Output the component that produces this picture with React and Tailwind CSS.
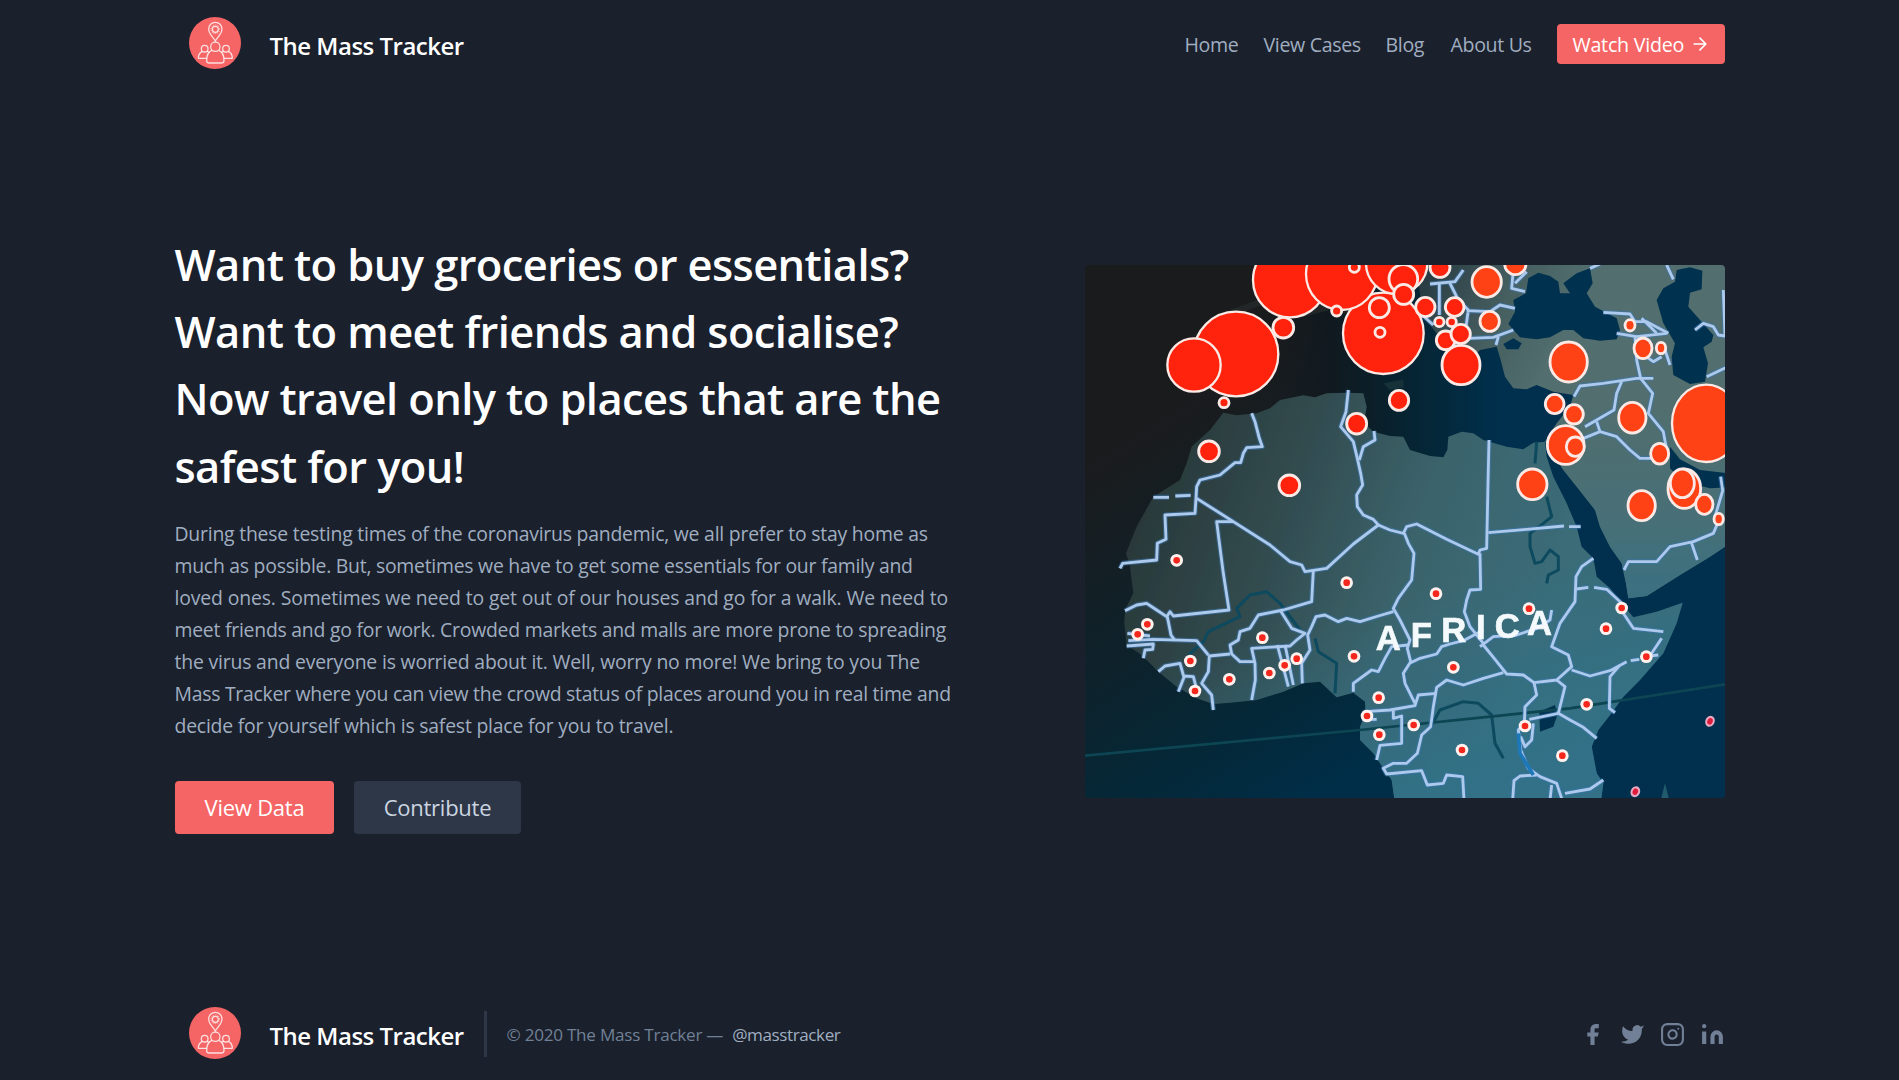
import React from 'react';

const FONT = "font-['Open_Sans','Noto_Sans',sans-serif]";

const headline = [
  'Want to buy groceries or essentials?',
  'Want to meet friends and socialise?',
  'Now travel only to places that are the',
  'safest for you!',
];

const intro = [
  ['During these testing times of the coronavirus pandemic, we all prefer to stay home as', 'tracking-[-0.22px]'],
  ['much as possible. But, sometimes we have to get some essentials for our family and', 'tracking-[-0.25px]'],
  ['loved ones. Sometimes we need to get out of our houses and go for a walk. We need to', 'tracking-[-0.14px]'],
  ['meet friends and go for work. Crowded markets and malls are more prone to spreading', 'tracking-[-0.24px]'],
  ['the virus and everyone is worried about it. Well, worry no more! We bring to you The', 'tracking-[-0.18px]'],
  ['Mass Tracker where you can view the crowd status of places around you in real time and', 'tracking-[-0.26px]'],
  ['decide for yourself which is safest place for you to travel.', 'tracking-[-0.21px]'],
];

function Logo() {
  return (
    <svg viewBox="26 27 156 156" className="h-[52px] w-[52px] shrink-0">
      <circle cx="104" cy="105" r="78" fill="#f56565" />
      <g fill="none" stroke="#fff" strokeWidth="3.8" strokeOpacity="0.8" strokeLinejoin="round">
        <path d="M105 99 C98 86 85 78 85 63 A20 20 0 0 1 125 63 C125 78 112 86 105 99 Z" />
        <circle cx="105" cy="64" r="9" />
        <circle cx="105" cy="64" r="13" strokeWidth="3" strokeDasharray="2.5 3.3" />
        <circle cx="105" cy="116" r="14" />
        <path d="M95 127 C84 131 79 141 79 158 Q79 165 87 165 H122 Q131 165 131 158 C131 141 126 131 115 127" />
        <circle cx="73" cy="122" r="10" />
        <circle cx="137" cy="122" r="10" />
        <path d="M66 130 C57 134 54 141 54 151 H79" />
        <path d="M144 130 C153 134 156 141 156 151 H131" />
        <path d="M80 130 Q86 132 87 134 M130 130 Q124 132 123 134" />
      </g>
    </svg>
  );
}

function Brand() {
  return (
    <div className="flex items-center">
      <Logo />
      <span className="ml-[29px] mt-[5px] w-[194px] text-[24px] font-semibold leading-[28px] tracking-[-0.5px] whitespace-nowrap text-white">
        The Mass Tracker
      </span>
    </div>
  );
}

const EURASIA =
  'M1035 30 L1980 30 V880 L1920 920 L1830 975 L1730 1038 L1675 1045 L1668 1000 L1655 940 L1620 890 L1590 830 L1575 780 L1520 710 L1480 660 L1440 600 L1425 575 L1460 520 L1500 470 L1510 435 L1450 425 L1400 405 L1370 418 L1330 415 L1305 380 L1292 330 L1280 290 L1230 300 L1200 330 L1160 340 L1120 300 L1100 250 L1060 200 Z';

const AFRICA =
  'M835 428 L880 430 L890 470 L882 520 L910 545 L960 558 L1000 560 L1020 600 L1080 618 L1120 622 L1132 600 L1135 560 L1175 545 L1210 550 L1240 570 L1310 590 L1360 598 L1390 578 L1425 575 L1430 620 L1450 680 L1490 760 L1520 830 L1535 890 L1570 925 L1580 980 L1620 1015 L1655 1060 L1690 1102 L1760 1085 L1838 1058 L1820 1120 L1780 1210 L1710 1290 L1660 1340 L1620 1395 L1585 1440 L1565 1490 L1580 1570 L1600 1600 L1592 1660 L975 1660 L965 1590 L930 1540 L910 1510 L870 1470 L870 1430 L887 1390 L885 1355 L850 1328 L800 1342 L750 1295 L700 1300 L640 1325 L560 1350 L480 1358 L430 1362 L380 1345 L320 1310 L265 1265 L215 1215 L170 1185 L163 1120 L165 1080 L190 1030 L180 950 L168 910 L200 830 L250 740 L330 690 L350 640 L365 590 L420 540 L460 488 L500 496 L560 490 L600 475 L630 450 L700 436 L735 442 L770 430 Z';

const SEAS = [
  'M1405 68 L1440 78 L1465 95 L1470 130 L1500 130 L1480 100 L1520 70 L1560 55 L1568 100 L1550 130 L1575 170 L1640 205 L1650 240 L1640 268 L1590 272 L1540 265 L1510 240 L1480 240 L1440 262 L1400 268 L1350 262 L1315 222 L1335 185 L1330 150 L1368 130 L1375 85 Z',
  'M1300 282 L1330 265 L1355 280 L1345 298 L1310 298 Z',
  'M1820 60 L1860 52 L1897 62 L1895 118 L1860 128 L1855 170 L1890 210 L1930 255 L1925 275 L1900 292 L1914 340 L1905 395 L1860 402 L1810 375 L1805 320 L1815 280 L1780 220 L1760 150 L1780 115 L1815 95 Z',
  'M1800 590 L1830 628 L1890 660 L1975 670 L1975 712 L1920 715 L1840 695 L1800 655 Z',
  'M1408 1385 L1455 1365 L1462 1395 L1450 1430 L1410 1445 Z',
];

const BORDERS = [
  'M545 490 L555 515 L568 565 L577 590 L530 593 L520 610 L512 638 L495 638 L450 675 L390 690 L380 710 L378 745 L375 790 L285 795 L288 868 L262 880 L260 930 L158 940 L150 955',
  'M380 745 L490 815 L600 885 L660 935 L695 945 L705 965 L770 955 L850 882 L925 825 L910 808 L880 795 L862 770 L860 735 L878 705 L872 670 L862 625 L850 575 L812 530 L828 485 L835 420',
  'M490 815 L440 815 L447 870 L460 970 L477 1080 L310 1098 L300 1085 L290 1100 L260 1080 L230 1060 L200 1065 L165 1082',
  'M292 1100 L303 1155 L315 1172',
  'M868 630 L880 590 L915 570 L912 543',
  'M250 742 H297 M316 738 L362 736',
  'M925 825 L960 840 L1000 850 L1010 830 L1040 822 L1130 868 L1225 913 L1230 900 L1250 895 L1254 700 L1257 570',
  'M1255 848 L1370 838 L1482 828 M1497 830 H1532',
  'M1230 910 L1232 1018 L1200 1020 L1190 1050 L1183 1085 L1200 1130 L1240 1180',
  'M1003 850 L1015 880 L1032 910 L1025 990 L985 1045 L970 1075 L990 1110 L1020 1170 L1012 1195 L1022 1235 L1000 1270 L1005 1300 L1035 1360',
  'M1022 1238 L1050 1225 L1100 1212 L1115 1190 L1140 1182 L1180 1172 L1240 1140',
  'M1240 1185 L1275 1228 L1310 1272 L1360 1275 L1392 1298 L1460 1290 L1505 1250 L1495 1215 L1445 1190 L1470 1120 L1515 1055 L1518 980 L1535 950 L1570 925',
  'M1230 1190 L1270 1160 L1340 1155 L1400 1135 L1440 1110 L1445 1080',
  'M1300 1268 L1240 1285 L1180 1305 L1130 1290 L1100 1312 L1090 1370 L1082 1430 L1055 1455 L1042 1510 L1010 1540 L970 1540 L940 1555 L950 1572 L1055 1562 L1072 1605 L1120 1600 L1130 1575 L1178 1580 L1182 1650',
  'M1100 1330 L1045 1335 L1035 1367 L960 1380 L885 1385 L882 1408 L920 1408',
  'M970 1382 V1405 L995 1398 L995 1480 L930 1486 L920 1530',
  'M1392 1298 L1400 1335 L1365 1370 L1363 1420 L1345 1440 L1352 1500 L1375 1555 L1410 1580 L1460 1600 L1475 1645',
  'M1460 1290 L1485 1310 L1465 1390 L1500 1410 L1540 1432 L1580 1465',
  'M1378 1408 L1465 1390 M1390 1420 L1385 1470 L1365 1490 L1352 1460',
  'M1505 1260 L1560 1278 L1620 1262 L1670 1235 M1650 1245 L1620 1280 L1618 1375 L1635 1388',
  'M1682 1232 L1708 1228 M1718 1220 L1765 1215',
  'M1660 1090 L1690 1135 L1780 1145 M1775 1165 L1735 1225',
  'M1520 1017 L1555 1012 M1572 1012 L1610 1018 L1655 1060',
  'M1485 1630 L1560 1617 L1600 1590 M1440 1650 L1445 1605',
  'M1328 1650 L1332 1592 L1350 1578 L1400 1575',
  'M850 1325 L850 1300 L905 1260 L925 1265 L945 1225 L965 1190 L1015 1185',
  'M970 1085 L925 1098 L870 1115 L830 1105 L805 1115 L765 1095 L738 1100 L725 1130 L713 1155 L720 1200 L695 1240 L697 1300',
  'M730 960 L725 1055 L640 1080 L565 1095 L540 1135 L510 1145 L505 1170 L480 1185 L485 1212 L510 1235 L555 1235',
  'M630 1080 L665 1135 L705 1150 L680 1170 L660 1188 L545 1195 L555 1240 L556 1290 L545 1350',
  'M622 1185 L655 1310 M645 1185 L670 1305',
  'M480 1212 L418 1218 L415 1265 L395 1300 L425 1335 L430 1380',
  'M175 1172 L250 1168 L380 1172 L415 1215 M172 1150 L240 1158 M170 1188 L250 1182 L248 1198 L225 1200 L220 1225',
  'M265 1265 L285 1248 L330 1240 L342 1282 L325 1325 M342 1278 L370 1280 L378 1310',
  'M1512 440 L1530 408 L1600 400 L1700 385 L1750 385 M1655 395 L1640 430 L1632 480 L1545 530',
  'M1540 565 L1590 545 L1640 560 L1680 600 L1710 625 L1760 625 M1580 515 L1590 545',
  'M1695 260 L1700 330 L1712 385 L1748 430 L1735 490 L1780 545 L1790 600',
  'M1600 187 L1680 192 L1695 215 L1730 215 L1795 250 M1640 250 L1700 260 L1790 250',
  'M1700 300 L1750 335 L1775 320 M1785 300 L1800 345 M1715 205 L1760 250',
  'M1875 240 L1900 220 L1930 230 L1945 255 L1965 258 L1960 120 M1910 380 L1970 352',
  'M1952 680 L1958 722 L1935 800 M1662 960 L1675 935 L1760 935 L1800 890 L1870 875 L1930 850 L1945 815 M1865 880 L1882 930',
  'M1180 60 L1155 95 L1080 102 M1108 100 V195 M1140 100 L1165 150 L1195 180 L1188 230 M1040 180 L1090 225 M1190 182 L1260 185 L1290 165 L1335 175',
  'M1195 265 L1270 262 L1330 240 M1285 260 L1278 285 M1330 60 L1325 115 L1365 125 M1370 65 L1335 100 M1790 45 L1810 88 M1560 55 L1590 42',
];

const RIVERS = [
  'M355 1215 L400 1175 L415 1145 L510 1100 L500 1075 L540 1035 L590 1025 L630 1060 L690 1140',
  'M735 1165 L745 1205 L800 1240 L795 1330',
  'M1082 1430 L1110 1380 L1180 1355 L1225 1360 L1265 1395 L1275 1480 L1300 1525',
  'M1400 575 L1395 640 M1430 740 L1445 800 L1420 820 L1380 850 L1380 890 L1395 940 L1415 935 L1440 900 L1465 920 L1465 960 L1435 975 L1430 1000',
];

// [cx, cy, rx, ry]
const CASES = [
  [660, 90, 111, 112], [940, 250, 121, 122], [815, 72, 107, 108], [980, 40, 92, 92], [498, 312, 127, 127],
  [372, 345, 80, 80], [640, 233, 31, 31], [800, 183, 15, 15], [853, 52, 15, 15], [928, 173, 30, 30],
  [930, 247, 15, 15], [1000, 87, 43, 43], [1001, 133, 30, 30], [987, 451, 29, 30], [860, 521, 30, 31],
  [462, 458, 15, 15], [417, 604, 31, 31], [658, 706, 31, 31],
  [1110, 52, 30, 30], [1336, 42, 32, 32], [1250, 96, 44, 46], [1066, 171, 29, 29], [1154, 171, 28, 28],
  [1259, 214, 29, 30], [1108, 216, 14, 14], [1145, 216, 14, 14], [1127, 271, 28, 28], [1172, 252, 29, 29],
  [1173, 345, 57, 59], [1496, 336, 56, 60], [1680, 226, 15, 17], [1719, 295, 27, 31], [1773, 294, 14, 17],
  [1454, 462, 28, 29], [1512, 493, 28, 29], [1487, 585, 55, 58], [1516, 590, 27, 29], [1687, 503, 41, 46],
  [1908, 520, 102, 116], [1769, 611, 27, 31], [1843, 716, 49, 59], [1837, 700, 36, 43], [1903, 763, 26, 30],
  [1715, 767, 41, 45], [1387, 703, 44, 46], [1946, 807, 14, 17],
];

const PINS = [
  [320, 931], [830, 998], [232, 1123], [203, 1153], [577, 1163], [361, 1233], [478, 1288], [375, 1323],
  [598, 1269], [644, 1246], [680, 1226], [852, 1219], [926, 1343], [891, 1398], [928, 1454],
  [1098, 1031], [1377, 1076], [1655, 1074], [1608, 1136], [1729, 1220], [1150, 1252], [1550, 1363],
  [1365, 1428], [1031, 1425], [1176, 1500], [1477, 1517],
];

function CaseMap() {
  return (
    <svg viewBox="45 45 1920 1599" preserveAspectRatio="none" className="block h-[533px] w-[640px] rounded">
      <defs>
        <linearGradient id="sea" gradientUnits="userSpaceOnUse" x1="350" y1="450" x2="1000" y2="1500">
          <stop offset="0" stopColor="#1a1b1d" />
          <stop offset="0.45" stopColor="#0e222b" />
          <stop offset="0.75" stopColor="#042838" />
          <stop offset="1" stopColor="#002e49" />
        </linearGradient>
        <linearGradient id="med" gradientUnits="userSpaceOnUse" x1="560" y1="0" x2="1300" y2="0">
          <stop offset="0" stopColor="#161b20" stopOpacity="0" />
          <stop offset="0.3" stopColor="#10191f" />
          <stop offset="0.65" stopColor="#052534" />
          <stop offset="1" stopColor="#00304e" />
        </linearGradient>
        <linearGradient id="land" gradientUnits="userSpaceOnUse" x1="250" y1="700" x2="1400" y2="1100">
          <stop offset="0" stopColor="#2a393a" />
          <stop offset="0.3" stopColor="#314a4d" />
          <stop offset="0.65" stopColor="#3b636b" />
          <stop offset="1" stopColor="#3a6c78" />
        </linearGradient>
        <linearGradient id="south" gradientUnits="userSpaceOnUse" x1="1200" y1="1000" x2="1350" y2="1600">
          <stop offset="0" stopColor="#2f728c" stopOpacity="0" />
          <stop offset="1" stopColor="#2f728c" stopOpacity="0.8" />
        </linearGradient>
        <linearGradient id="europe" gradientUnits="userSpaceOnUse" x1="1050" y1="0" x2="1500" y2="200">
          <stop offset="0" stopColor="#24363e" />
          <stop offset="0.6" stopColor="#465f60" />
          <stop offset="1" stopColor="#526e6e" />
        </linearGradient>
        <linearGradient id="arabia" gradientUnits="userSpaceOnUse" x1="0" y1="450" x2="0" y2="1050">
          <stop offset="0" stopColor="#466e76" stopOpacity="0" />
          <stop offset="1" stopColor="#3a7082" />
        </linearGradient>
        <filter id="soft" x="-5%" y="-5%" width="110%" height="110%">
          <feGaussianBlur stdDeviation="2.1" />
        </filter>
      </defs>
      <rect x="45" y="45" width="1920" height="1600" fill="url(#sea)" />
      <path d="M560 45 H1980 V1660 H1400 V700 L560 500 Z" fill="url(#med)" />
      <g filter="url(#soft)">
        <path d="M365 265 L380 250 L480 180 L560 150 L700 200 L780 180 L870 200 L820 130 L560 170 L400 240 Z" fill="#202628" />
        <path d="M940 400 L1000 388 L1002 412 L960 420 Z" fill="#123138" />
        <path d={EURASIA} fill="url(#europe)" />
        <path d={EURASIA} fill="url(#arabia)" />
        <path d={AFRICA} fill="url(#land)" />
        <path d={AFRICA} fill="url(#south)" />
        {SEAS.map((d) => (
          <path key={d} d={d} fill="#003150" />
        ))}
        <path d="M1770 1660 L1785 1600 L1800 1660 Z" fill="#245a6e" />
        <g fill="none" stroke="#0c4a5e" strokeWidth="9" strokeLinejoin="round">
          {RIVERS.map((d) => (
            <path key={d} d={d} />
          ))}
        </g>
        <path d="M45 1517 L870 1440 L1500 1375 L1965 1303" fill="none" stroke="#0b4452" strokeWidth="8" />
        <g fill="none" strokeLinejoin="round" strokeLinecap="butt">
          {BORDERS.map((d) => (
            <path key={d} d={d} stroke="#3a78b5" strokeWidth="15" strokeOpacity="0.55" />
          ))}
          {BORDERS.map((d) => (
            <path key={d} d={d} stroke="#adc9ec" strokeWidth="8.5" />
          ))}
        </g>
        <path d="M1345 1450 L1350 1510 L1390 1575" fill="none" stroke="#1d78b8" strokeWidth="11" />
        {CASES.map(([cx, cy, rx, ry]) => (
          <ellipse
            key={`${cx}-${cy}`}
            cx={cx}
            cy={cy}
            rx={rx}
            ry={ry}
            fill={cx > 1200 ? '#ff4216' : '#ff2208'}
            stroke="#fbe9e6"
            strokeWidth={rx > 70 ? 7 : 8.5}
          />
        ))}
        {PINS.map(([cx, cy]) => (
          <g key={`${cx}-${cy}`}>
            <circle cx={cx} cy={cy} r="19" fill="#fff1ee" />
            <circle cx={cx} cy={cy} r="10" fill="#f5261b" />
          </g>
        ))}
        {[[1920, 1414], [1696, 1625]].map(([cx, cy]) => (
          <g key={cx} transform={`rotate(25 ${cx} ${cy})`}>
            <ellipse cx={cx} cy={cy} rx="14" ry="17" fill="#e8a9c4" />
            <ellipse cx={cx} cy={cy} rx="8" ry="10" fill="#e01c3c" />
          </g>
        ))}
        <text
          x="917 1022 1114 1218 1274 1371"
          y="1200 1190 1177 1168 1164 1154"
          fontSize="104"
          fontWeight="700"
          fontFamily="Liberation Sans, Arial, sans-serif"
          fill="#f4f9fb"
          stroke="#f4f9fb"
          strokeWidth="2"
        >
          AFRICA
        </text>
      </g>
    </svg>
  );
}

function Socials() {
  return (
    <div className="flex gap-[15px] text-[#718096]">
      <svg fill="currentColor" viewBox="0 0 24 24" className="h-[25px] w-[25px]">
        <path d="M18 2h-3a5 5 0 00-5 5v3H7v4h3v8h4v-8h3l1-4h-4V7a1 1 0 011-1h3z" />
      </svg>
      <svg fill="currentColor" viewBox="0 0 24 24" className="h-[25px] w-[25px]">
        <path d="M23 3a10.9 10.9 0 01-3.14 1.53 4.48 4.48 0 00-7.86 3v1A10.66 10.66 0 013 4s-4 9 5 13a11.64 11.64 0 01-7 2c9 5 20 0 20-11.5a4.5 4.5 0 00-.08-.83A7.72 7.72 0 0023 3z" />
      </svg>
      <svg fill="none" stroke="currentColor" strokeWidth="2" strokeLinecap="round" strokeLinejoin="round" viewBox="0 0 24 24" className="h-[25px] w-[25px]">
        <rect width="20" height="20" x="2" y="2" rx="5" ry="5" />
        <path d="M16 11.37A4 4 0 1112.63 8 4 4 0 0116 11.37zm1.5-4.87h.01" />
      </svg>
      <svg fill="currentColor" viewBox="0 0 24 24" className="h-[25px] w-[25px]">
        <path d="M16 8a6 6 0 016 6v7h-4v-7a2 2 0 00-2-2 2 2 0 00-2 2v7h-4v-7a6 6 0 016-6zM2 9h4v12H2z" />
        <circle cx="4" cy="4" r="2" />
      </svg>
    </div>
  );
}

export default function App() {
  return (
    <div className={`${FONT} h-[1080px] overflow-hidden bg-[#1a202c] text-[#a0aec0]`}>
      <div className="mx-auto flex h-full w-[1550px] flex-col">
        <header className="flex h-[88px] shrink-0 items-center justify-between">
          <div className="-mt-[2px] pl-[14px]">
            <Brand />
          </div>
          <div className="flex items-center">
            <nav className="mt-[2px] flex text-[19.6px] leading-[28px] tracking-[-0.35px] whitespace-nowrap">
              <a className="w-[79px]">Home</a>
              <a className="w-[122px]">View Cases</a>
              <a className="w-[65px]">Blog</a>
              <a className="w-[106px]">About Us</a>
            </nav>
            <button className="flex h-[40px] w-[168px] items-center justify-between rounded bg-[#f56565] pr-[15px] pl-[16px] text-[19.7px] leading-[28px] tracking-[-0.25px] whitespace-nowrap text-white">
              <span className="mt-[2px]">Watch Video</span>
              <svg fill="none" stroke="currentColor" strokeWidth="2" strokeLinecap="round" strokeLinejoin="round" viewBox="0 0 24 24" className="h-[20px] w-[20px]">
                <path d="M5 12h14M12 5l7 7-7 7" />
              </svg>
            </button>
          </div>
        </header>

        <main className="flex grow items-start justify-between">
          <div className="pt-[143px]">
            <h1 className="text-[43.5px] font-semibold leading-[67.2px] tracking-[-0.6px] whitespace-nowrap text-white">
              {headline.map((line) => (
                <span key={line} className="block">{line}</span>
              ))}
            </h1>
            <p className="mt-[18px] text-[19.4px] leading-[32px] whitespace-nowrap">
              {intro.map(([line, tracking]) => (
                <span key={line} className={`block ${tracking}`}>{line}</span>
              ))}
            </p>
            <div className="mt-[39px] flex gap-[20px] text-[22px] tracking-[-0.25px]">
              <button className="h-[53px] w-[159px] rounded bg-[#f56565] pt-[1px] pl-[1px] text-white">View Data</button>
              <button className="h-[53px] w-[167px] rounded bg-[#2d3748] pt-[1px] pl-[1px] text-[#cbd5e0]">Contribute</button>
            </div>
          </div>
          <div className="pt-[177px]">
            <CaseMap />
          </div>
        </main>

        <footer className="flex h-[92px] shrink-0 items-center justify-between">
          <div className="flex items-center">
            <div className="-mt-[2px] pl-[14px]">
              <Brand />
            </div>
            <div className="ml-[20px] flex h-[46px] items-center border-l-[3px] border-[#2d3748] pl-[20px] text-[17.1px] leading-[24px] tracking-[-0.25px] whitespace-nowrap text-[#718096]">
              <span className="mt-[1px]">© 2020 The Mass Tracker —</span>
              <a className="mt-[1px] ml-[9px] text-[#a0aec0] tracking-[-0.42px]">@masstracker</a>
            </div>
          </div>
          <Socials />
        </footer>
      </div>
    </div>
  );
}
